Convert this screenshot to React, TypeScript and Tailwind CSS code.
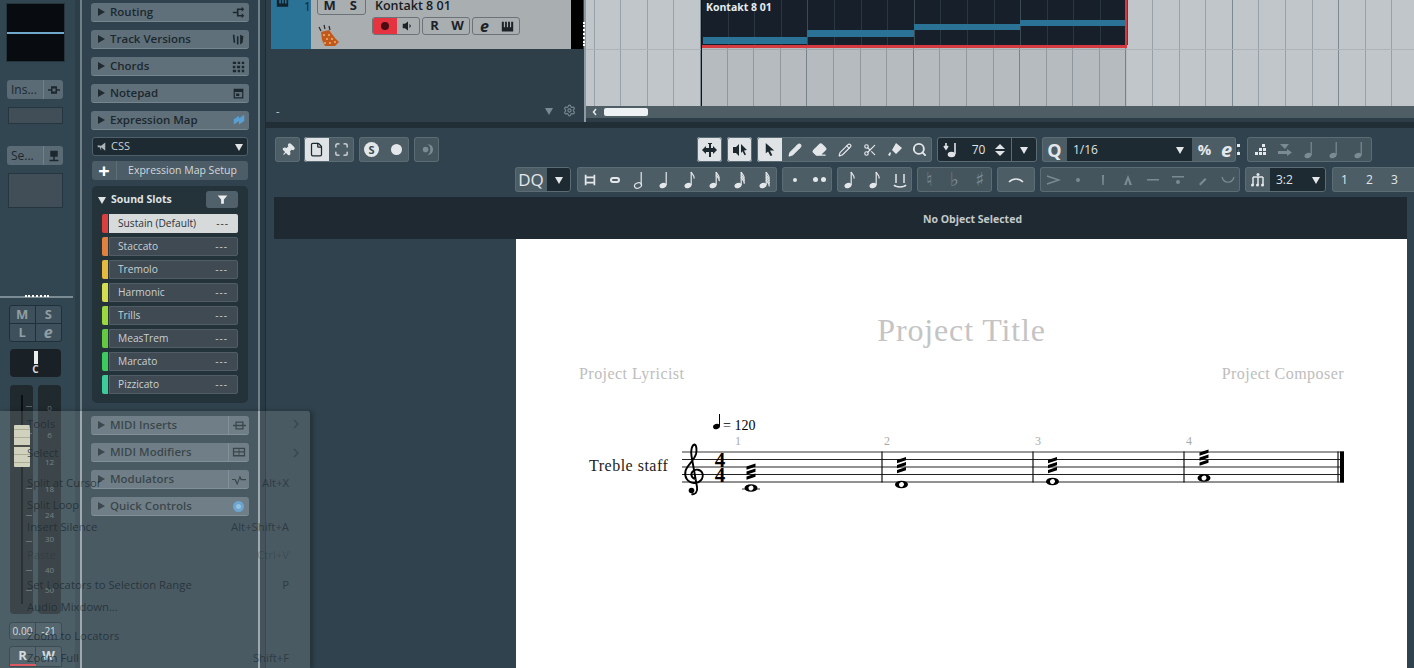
import React from 'react'
import { Pencil, Eraser, Scissors, Search, Pin, File, Maximize, Settings } from 'lucide-react'

const Tri = ({ down = false, cls = 'text-[#1f2b31]' }: { down?: boolean; cls?: string }) => (
  <svg width="8" height="8" viewBox="0 0 8 8" className={cls}>
    <path d={down ? 'M0 1h8L4 8z' : 'M1 0l7 4-7 4z'} fill="currentColor" />
  </svg>
)

const I = ({ d, cls = '', size = 16 }: { d: string; cls?: string; size?: number }) => (
  <svg width={size} height={size} viewBox="0 0 16 16" className={cls}>
    <path d={d} fill="currentColor" />
  </svg>
)

// note icon: flags = number of tails, open = half note
const Note = ({ flags = 0, open = false, cls = '' }: { flags?: number; open?: boolean; cls?: string }) => (
  <svg width="16" height="18" viewBox="0 0 16 18" className={cls}>
    <ellipse cx="6" cy="14.5" rx="3.6" ry="2.6" transform="rotate(-20 6 14.5)" fill={open ? 'none' : 'currentColor'} stroke="currentColor" strokeWidth={open ? 1.2 : 0} />
    <path d="M9.2 14V1" stroke="currentColor" strokeWidth="1.2" fill="none" />
    {Array.from({ length: flags }).map((_, i) => (
      <path key={i} d={`M9.2 ${1 + i * 2.6}c.5 2.5 3.5 3 3 6.5`} stroke="currentColor" strokeWidth="1.3" fill="none" />
    ))}
  </svg>
)

function Section({ title, icon, divided }: { title: string; icon: React.ReactNode; divided?: boolean }) {
  return (
    <div className="flex h-[19px] w-[158px] items-center rounded-[3px] bg-[#5f707a] pl-[6px] text-[#1c282e] border-b border-[#76868e]">
      <Tri />
      <span className="ml-[5px] text-[11.5px] font-semibold leading-none">{title}</span>
      <span className={`ml-auto flex h-full w-[21px] items-center justify-center ${divided ? 'border-l border-[#76868e]' : ''}`}>{icon}</span>
    </div>
  )
}

const slots = [
  ['Sustain (Default)', 'bg-[#d8403f]'],
  ['Staccato', 'bg-[#e0813f]'],
  ['Tremolo', 'bg-[#e6b93f]'],
  ['Harmonic', 'bg-[#d4dc50]'],
  ['Trills', 'bg-[#9ad83f]'],
  ['MeasTrem', 'bg-[#63c940]'],
  ['Marcato', 'bg-[#3ecb5d]'],
  ['Pizzicato', 'bg-[#3ecb9a]'],
]

function ChannelStrip() {
  return (
    <div className="flex h-full w-[75px] shrink-0 flex-col bg-[#324651] text-[#d5dadc]">
      <div className="ml-[6px] mt-[3px] h-[59px] w-[59px] border border-[#26343c] bg-[#080b10] relative">
        <div className="absolute left-0 right-0 top-[28px] h-[2px] bg-[#6fa8c9]" />
      </div>
      <div className="ml-[7px] mt-[18px] flex h-[19px] w-[56px] items-center rounded-[3px] bg-[#5a6b75] text-[12px] text-[#1c282e]">
        <span className="w-[37px] border-r border-[#728189] pl-[4px] leading-[19px] font-medium">Ins...</span>
        <span className="flex flex-1 justify-center"><I size={12} d="M4 3h8v10H4zM6 6v4h4V6zM0 7h4v2H0zM12 7h4v2h-4z" /></span>
      </div>
      <div className="ml-[8px] mt-[8px] h-[17px] w-[55px] border border-[#263640] bg-[#414e57]" />
      <div className="ml-[7px] mt-[22px] flex h-[19px] w-[56px] items-center rounded-[3px] bg-[#5a6b75] text-[12px] text-[#1c282e]">
        <span className="w-[37px] border-r border-[#728189] pl-[4px] leading-[19px] font-medium">Se...</span>
        <span className="flex flex-1 justify-center"><I size={12} d="M3 1h10v8H3zM7 9h2v4H7zM2 13h12v2H2z" /></span>
      </div>
      <div className="ml-[8px] mt-[8px] h-[35px] w-[55px] border border-[#263640] bg-[#414e57]" />

      <div className="mt-[88px] flex h-[2px] w-[73px] justify-center bg-[#7b8b93]">
        <div className="h-[2px] w-[24px] -translate-y-px border-t-2 border-dotted border-white" />
      </div>

      <div className="ml-[9px] mt-[7px] grid h-[37px] w-[53px] grid-cols-2 grid-rows-2 overflow-hidden rounded-[3px] border border-[#20303a] bg-[#3e505b] text-[13px] font-bold leading-none text-[#8f9da4]">
        <span className="flex items-center justify-center border-b border-r border-[#20303a]">M</span>
        <span className="flex items-center justify-center border-b border-[#20303a]">S</span>
        <span className="flex items-center justify-center border-r border-[#20303a]">L</span>
        <span className="flex items-center justify-center text-[16px] italic">e</span>
      </div>
      <div className="ml-[10px] mt-[7px] flex h-[28px] w-[51px] flex-col items-center rounded-[4px] bg-[#1a2126]">
        <div className="mt-[2px] h-[13px] w-[4px] bg-[#eceeee]" />
        <span className="text-[10px] font-bold leading-[10px] text-[#d5dadc]">C</span>
      </div>

      <div className="ml-[10px] mt-[8px] flex h-[229px] gap-[5px]">
        <div className="relative w-[23px] rounded-[4px] bg-[#1f292e]">
          <div className="absolute bottom-[10px] left-[11px] top-[10px] w-[2px] bg-[#0b0f12]" />
          <div className="absolute left-[16px] top-[21px] h-px w-[6px] bg-[#56636a]" />
          <div className="absolute left-[16px] top-[48px] h-px w-[6px] bg-[#56636a]" />
          <div className="absolute left-[16px] top-[103px] h-px w-[6px] bg-[#56636a]" />
          <div className="absolute left-[16px] top-[130px] h-px w-[6px] bg-[#56636a]" />
          <div className="absolute left-[16px] top-[156px] h-px w-[6px] bg-[#56636a]" />
          <div className="absolute left-[16px] top-[185px] h-px w-[6px] bg-[#56636a]" />
          <div className="absolute left-[16px] top-[205px] h-px w-[6px] bg-[#56636a]" />
          <div className="absolute left-[4px] top-[40px] flex h-[42px] w-[16px] flex-col justify-between rounded-[1px] bg-[#d9d8bd] py-[4px]">
            <div className="h-px bg-[#aaa98e]" />
            <div className="h-px bg-[#aaa98e]" />
            <div className="h-[2px] bg-[#33332c]" />
            <div className="h-px bg-[#aaa98e]" />
            <div className="h-px bg-[#aaa98e]" />
          </div>
        </div>
        <div className="relative w-[23px] rounded-[4px] bg-[#1f292e] text-center text-[8px] leading-none text-[#66747b]">
          <span className="absolute inset-x-0 top-[19px]">0</span>
          <span className="absolute inset-x-0 top-[46px]">6</span>
          <span className="absolute inset-x-0 top-[73px]">12</span>
          <span className="absolute inset-x-0 top-[100px]">18</span>
          <span className="absolute inset-x-0 top-[126px]">24</span>
          <span className="absolute inset-x-0 top-[150px]">30</span>
          <span className="absolute inset-x-0 top-[181px]">40</span>
          <span className="absolute inset-x-0 top-[201px]">50</span>
        </div>
      </div>

      <div className="ml-[9px] mt-[8px] flex h-[18px] w-[53px] rounded-[3px] border border-[#20303a] bg-[#3e505b] text-[10px] leading-[16px] text-[#dfe3e5]">
        <span className="w-[26px] border-r border-[#20303a] text-center">0.00</span>
        <span className="flex-1 text-center">-21</span>
      </div>
      <div className="relative ml-[9px] mt-[6px] flex h-[21px] w-[53px] overflow-hidden rounded-t-[3px] border border-[#20303a] bg-[#3e505b] text-[13px] font-bold leading-[16px] text-[#dfe3e5]">
        <span className="w-[26px] border-r border-[#20303a] text-center">R</span>
        <span className="flex-1 text-center">W</span>
        <div className="absolute bottom-0 left-0 h-[2px] w-[26px] bg-[#e5404a]" />
      </div>
    </div>
  )
}

function Inspector() {
  return (
    <div className="flex h-full w-[180px] shrink-0 flex-col gap-[8px] border-x-2 border-[#6f8089] bg-[#2f424d] pl-[9px] pt-[3px]" >
      <Section title="Routing" icon={<I size={13} cls="text-[#1c282e]" d="M1 7h5V3h6V1l3 3-3 3V5H8v6h4V9l3 3-3 3v-2H6V9H1z" />} />
      <Section title="Track Versions" icon={<I size={13} cls="text-[#1c282e]" d="M1 2h2l1 10H2zM6 4h2v10H6zM10 2l4 2-1 8-3 2z" />} />
      <Section title="Chords" icon={<I size={13} cls="text-[#1c282e]" d="M1 2h4v3H1zM7 2h3v3H7zM12 2h3v3h-3zM1 7h3v3H1zM6 7h4v3H6zM12 7h3v3h-3zM1 12h4v3H1zM7 12h3v3H7zM12 12h3v3h-3z" />} />
      <Section title="Notepad" icon={<I size={13} cls="text-[#1c282e]" d="M2 2h12v12H2zM3.5 6v6.5h9V6zM5 8h4v3H5z" />} />
      <Section title="Expression Map" icon={<I size={14} cls="text-[#5a9fd4]" d="M2 7l6-4v6l-6 4zM8 6l6-4v7l-6 4z" />} />
      <div className="-ml-px -mt-[1px] flex h-[19px] w-[156px] translate-x-[2px] items-center rounded-[3px] border border-[#50606a] bg-[#1e2a32] pl-[4px] pr-[4px] text-[11px] text-[#c9d0d4]">
        <I size={11} cls="text-[#aab4b9]" d="M1 6l5 1 6-5v12L6 9v5L4 9H1z" />
        <span className="ml-[3px]">CSS</span>
        <span className="ml-auto"><Tri down cls="text-[#dfe3e5]" /></span>
      </div>
      <div className="-mt-[3px] ml-px flex h-[19px] w-[156px] items-center rounded-[3px] bg-[#4d5d67] text-[10.5px] text-[#d2d8db]">
        <span className="flex h-full w-[25px] items-center justify-center border-r border-[#5f6f78] text-[20px] font-bold leading-none text-white">+</span>
        <span className="flex-1 text-center">Expression Map Setup</span>
      </div>
      <div className="-mt-[2px] ml-px flex h-[217px] w-[156px] flex-col rounded-[5px] bg-[#24323a] pl-[10px] pr-[10px]">
        <div className="flex h-[28px] items-center pb-[1px]">
          <Tri down cls="-ml-[4px] text-[#dfe3e5]" />
          <span className="ml-[5px] text-[10.5px] font-bold text-[#dfe3e5]">Sound Slots</span>
          <span className="ml-auto flex h-[17px] w-[32px] items-center justify-center rounded-[3px] bg-[#51616b]">
            <I size={11} cls="text-[#eceeee]" d="M1 2h14l-5 6v6H6V8z" />
          </span>
        </div>
        <div className="flex flex-col gap-[4px]">
          {slots.map(([name, col], i) => (
            <div key={name} className="flex h-[19px]">
              <div className={`w-[6px] rounded-l-[2px] ${col}`} />
              <div className={`ml-px flex flex-1 items-center justify-between rounded-r-[2px] pr-[9px] text-[10.2px] ${i === 0 ? 'bg-[#d7dadb] pl-[9px] text-[#2a3339]' : 'border border-[#515d66] bg-[#3f4a53] pl-[8px] text-[#c9d0d4]'}`}>
                <span>{name}</span>
                <span className="tracking-[1px]">---</span>
              </div>
            </div>
          ))}
        </div>
      </div>
      <div className="mt-[5px] flex flex-col gap-[8px]">
        <Section divided title="MIDI Inserts" icon={<I size={13} cls="text-[#1c282e]" d="M3 3h10v10H3zM4.5 4.5v2.5h7V4.5zM4.5 9v2.5h7V9zM0 7h3v2H0zM13 7h3v2h-3z" />} />
        <Section divided title="MIDI Modifiers" icon={<I size={14} cls="text-[#1c282e]" d="M1 3h14v10H1zM2.5 4.5V7h5V4.5zM8.5 4.5V7h5V4.5zM2.5 8.5v3h5v-3zM8.5 8.5v3h5v-3z" />} />
        <Section divided title="Modulators" icon={<I size={14} cls="text-[#1c282e]" d="M0 8h4l2 4 3-8 2 4h5v1.3h-6L9 7l-3 8-3-6H0z" />} />
        <Section title="Quick Controls" icon={<span className="block h-[11px] w-[11px] rounded-full border-[3px] border-[#5a9fd4] bg-[#8dc3ea]" />} />
      </div>
    </div>
  )
}

function TrackHeader() {
  const box = 'flex items-center rounded-[3px] border border-[#6c7378] text-[#1c2227] font-bold text-[13px] h-[18px]'
  return (
    <div className="flex h-full w-[318px] shrink-0 flex-col bg-[#2f3f49] pl-[5px]">
      <div className="flex h-[49px]">
        <div className="relative w-[40px] bg-[#2a7396] text-[#11222c]">
          <I size={13} cls="ml-[5px] -mt-[3px]" d="M1 0h14v12H1zM4 0v8h2V0zM7.500 0v8h2V0zM11 0v8h2V0z" />
          <span className="absolute left-[33px] top-0 text-[12px] leading-[13px] text-[#11222c]">1</span>
        </div>
        <div className="relative w-[260px] bg-[#a9aeb1]">
          <div className={`${box} absolute left-[6px] top-[-3px] w-[49px]`}>
            <span className="flex-1 text-center">M</span>
            <span className="flex-1 text-center">S</span>
          </div>
          <span className="absolute left-[64px] top-[-3px] text-[12.5px] font-semibold leading-[18px] text-[#151b1f]">Kontakt 8 01</span>
          <div className={`${box} absolute left-[61px] top-[17px] w-[48px] overflow-hidden`}>
            <span className="flex h-full w-[24px] items-center justify-center bg-[#e5333f]"><span className="h-[8px] w-[8px] rounded-full bg-[#4a0c10]" /></span>
            <span className="flex flex-1 justify-center"><I size={12} d="M1 5h3l4-3v12l-4-3H1zM10 5l2 3-2 3z" /></span>
          </div>
          <div className={`${box} absolute left-[111px] top-[17px] w-[48px]`}>
            <span className="flex-1 text-center">R</span>
            <span className="flex-1 text-center">W</span>
          </div>
          <div className={`${box} absolute left-[161px] top-[17px] w-[48px]`}>
            <span className="flex-1 text-center text-[16px] leading-none italic">e</span>
            <span className="flex flex-1 justify-center"><I size={13} d="M1 2h14v12H1zM3.500 2v7h1.500V2zM7.200 2v7h1.500V2zM11 2v7h1.500V2z" /></span>
          </div>
          <svg width="24" height="24" viewBox="0 0 24 24" className="absolute left-[6px] top-[24px]">
            <path d="M4 8l8-2 6 8 4 4-4 4-10 0-3-6z" fill="#c2591c" />
            <path d="M6 11h2M11 11h2M9 15h2M14 15h2M12 19h2M7 19h2M17 18h2" stroke="#f2b36a" strokeWidth="1.500" />
            <path d="M2 3l2 4M7 1l1 4M12 2l1 4" stroke="#2a2a2a" strokeWidth="1.200" />
          </svg>
        </div>
        <div className="w-[12px] bg-black" />
      </div>
      <div className="flex h-[73px] items-end pb-[4px] pl-[4px] pr-[8px] text-[#cfd5d8]">
        <span className="mb-[2px] ml-[1px] text-[11px] leading-none">-</span>
        <span className="ml-auto mb-[3px]"><Tri down cls="text-[#7b8a92]" /></span>
        <Settings size={13} className="ml-[10px] mb-[1px] text-[#7b8a92]" />
      </div>
    </div>
  )
}

function Lanes() {
  const cols = Array.from({ length: 31 })
  return (
    <div className="relative flex min-w-0 flex-1 flex-col border-l-2 border-[#8d9aa1]">
      <div className="absolute -left-[3px] top-[22px] h-[24px] border-l-2 border-dotted border-white" />
      <div className="relative h-[106px] overflow-hidden bg-[#c0c6ca]">
        <div className="flex h-full">
          <div className="w-[8.6px] shrink-0 border-r border-[#98a1a7]" />
          {cols.map((_, i) => (
            <div key={i} className={`w-[26.6px] shrink-0 border-r ${i % 4 === 3 ? 'border-[#7e8a91]' : 'border-[#98a1a7]'}`} />
          ))}
        </div>
        <div className="absolute inset-x-0 top-[49px] h-px bg-[#adb3b9]" />
        <div className="absolute bottom-0 left-[116px] top-[48px] w-[425px] bg-black/5" />
        <div className="absolute left-[116px] top-0 flex h-[48px] w-[425px] border-r-2 border-b-[3px] border-[#d43a40] bg-[#17202a]">
          {Array.from({ length: 16 }).map((_, i) => (
            <div key={i} className={`w-[26.6px] shrink-0 border-r ${i % 4 === 3 ? 'border-[#3c4a54]' : 'border-[#2a3742]'}`} />
          ))}
          <span className="absolute left-[4px] top-0 text-[10.5px] font-bold leading-[14px] text-[#e6ecef]">Kontakt 8 01</span>
          <div className="absolute left-[1px] top-[37px] h-[7px] w-[104px] bg-[#2a7396]" />
          <div className="absolute left-[105px] top-[30px] h-[7px] w-[107px] bg-[#2a7396]" />
          <div className="absolute left-[212px] top-[24px] h-[6px] w-[106px] bg-[#2a7396]" />
          <div className="absolute left-[318px] top-[20px] h-[6px] w-[105px] bg-[#2a7396]" />
        </div>
        <div className="absolute bottom-0 left-[115px] top-0 w-[1px] bg-[#10151a]" />
      </div>
      <div className="flex h-[12px] items-center bg-[#4f5e65]">
        <svg width="18" height="12" viewBox="0 0 18 12" className="text-[#e6eaec]"><path d="M10 3L7.500 6 10 9" fill="none" stroke="currentColor" strokeWidth="1.500" /></svg>
        <div className="ml-[0px] h-[8px] w-[44px] rounded-[2px] bg-[#eef1f3]" />
      </div>
      <div className="h-[4px] bg-[#2c3d47]" />
    </div>
  )
}

const Btn = ({ children, active, w = 'w-[25px]' }: { children: React.ReactNode; active?: boolean; w?: string }) => (
  <span className={`flex h-full shrink-0 items-center justify-center ${w} ${active ? 'bg-[#dfe3e5] text-[#1c282e]' : ''}`}>{children}</span>
)

const Grp = ({ children, cls = '', dim }: { children: React.ReactNode; cls?: string; dim?: boolean }) => (
  <div className={`flex h-full shrink-0 overflow-hidden rounded-[3px] outline outline-[#5c6c75] -outline-offset-1 ${dim ? 'bg-[#44555e] text-[#7b8b93]' : 'bg-[#4d5d66] text-[#e3e7e9]'} ${cls}`}>{children}</div>
)

function ToolbarTop() {
  return (
    <div className="flex h-[25px] pl-[9px]">
      <Grp><Btn><Pin size={14} fill="currentColor" className="rotate-45" /></Btn></Grp>
      <Grp cls="ml-[4px]">
        <Btn active><File size={15} /></Btn>
        <Btn><Maximize size={15} /></Btn>
      </Grp>
      <Grp cls="ml-[5px]">
        <Btn><span className="flex h-[15px] w-[15px] items-center justify-center rounded-full bg-[#e3e7e9] text-[11px] font-bold leading-none text-[#3a4a53]">S</span></Btn>
        <Btn><span className="h-[11px] w-[11px] rounded-full bg-[#e3e7e9]" /></Btn>
      </Grp>
      <Grp dim cls="ml-[5px]">
        <Btn><I size={15} d="M9 2a6 6 0 110 12A6.500 6.500 0 0012 8 6.500 6.500 0 009 2zM7 5a3 3 0 110 6 3 3 0 010-6z" /></Btn>
      </Grp>
      <Grp cls="ml-[258px]"><Btn active><I d="M7 1h3v1H9v4h2V4l4 4-4 4v-2H9v5H7v-5H4v2L0 8l4-4v2h3V2H6V1z" /></Btn></Grp>
      <Grp cls="ml-[5px]"><Btn active><I d="M1 5h3l3-3v12l-3-3H1zM9 2l6 6-3 .5 2 4-1.500.8-2-4L9 11z" /></Btn></Grp>
      <Grp cls="ml-[5px]">
        <Btn active><I size={15} d="M4 1l9 8H8.500l2.500 5-2 1-2.500-5L4 12z" /></Btn>
        <Btn><Pencil size={14} fill="currentColor" /></Btn>
        <Btn><Eraser size={15} fill="currentColor" /></Btn>
        <Btn><Pencil size={14} /></Btn>
        <Btn><Scissors size={14} /></Btn>
        <Btn><I d="M9 1l6 5-6 6-4-4zM3 10l1 1-1 3-2-1z" /></Btn>
        <Btn><Search size={15} strokeWidth={3} /></Btn>
      </Grp>
      <div className="ml-[5px] flex h-full w-[100px] shrink-0 overflow-hidden rounded-[3px] border border-[#5c6c75] bg-[#1e2a32] text-[#dfe3e5]">
        <span className="flex w-[25px] items-center justify-center">
          <svg width="16" height="18" viewBox="0 0 16 18"><path d="M3 2v5M1 5l2 3 2-3M12 2v11" stroke="currentColor" strokeWidth="1.600" fill="none" /><ellipse cx="8.500" cy="13.500" rx="3.800" ry="2.800" fill="currentColor" /></svg>
        </span>
        <span className="flex w-[31px] items-center justify-center text-[12px]">70</span>
        <span className="flex w-[12px] flex-col items-center justify-center gap-[2px]">
          <svg width="10" height="5" viewBox="0 0 10 5"><path d="M0 5l5-5 5 5z" fill="currentColor" /></svg>
          <svg width="10" height="5" viewBox="0 0 10 5"><path d="M0 0l5 5 5-5z" fill="currentColor" /></svg>
        </span>
        <span className="ml-auto flex w-[25px] items-center justify-center border-l border-[#5c6c75]"><Tri down cls="text-[#e3e7e9]" /></span>
      </div>
      <Grp cls="ml-[5px] w-[194px]">
        <Btn><span className="text-[18px] font-bold leading-none">Q</span></Btn>
        <span className="flex w-[125px] shrink-0 items-center justify-between bg-[#1e2a32] pl-[6px] pr-[8px] text-[12px] text-[#dfe3e5]">1/16<Tri down cls="text-[#e3e7e9]" /></span>
        <Btn><span className="text-[15px] font-bold leading-none">%</span></Btn>
        <Btn w="w-[19px]"><span className="text-[20px] font-bold italic leading-none">e</span></Btn>
      </Grp>
      <span className="ml-[1px] mt-[7px] h-[11px] w-[3px] border-l-[3px] border-dotted border-[#e3e7e9]" />
      <Grp dim cls="ml-[7px]">
        <Btn><I cls="text-[#e3e7e9]" d="M10 2h3v3h-3zM7 6h3v3H7zM11 6h3v3h-3zM3 10h3v3H3zM7 10h3v3H7zM11 10h3v3h-3z" /></Btn>
        <Btn><I d="M3 2h9L8 7zM1 9h9V7l5 3.500L10 14v-2H1z" /></Btn>
        <Btn><Note /></Btn>
        <Btn><Note /></Btn>
        <Btn><Note /></Btn>
      </Grp>
    </div>
  )
}

const arts = [
  <svg width="16" height="16" viewBox="0 0 16 16"><path d="M2 4l12 4-12 4" fill="none" stroke="currentColor" strokeWidth="1.500" /></svg>,
  <I size={16} d="M6 8a2 2 0 104 0 2 2 0 00-4 0z" />,
  <I size={16} d="M7 3h2l-.3 10H7.300z" />,
  <I size={16} d="M8 3l4 10H9.500L8 8l-1.500 5H4z" />,
  <I size={16} d="M2 7h12v1.500H2z" />,
  <I size={16} d="M2 4h12v1.500H2zM6 10a2 2 0 104 0 2 2 0 00-4 0z" />,
  <I size={16} d="M4 12l6-6 1.500 1.500-6 6z" />,
  <svg width="16" height="16" viewBox="0 0 16 16"><path d="M2 5c2 7 10 7 12 0" fill="none" stroke="currentColor" strokeWidth="1.200" /></svg>,
]

function ToolbarBottom() {
  return (
    <div className="mt-[5px] flex h-[25px] w-[1148px] overflow-hidden pl-[249px]">
      <Grp cls="w-[56px]">
        <span className="flex w-[32px] items-center justify-center text-[17px] font-medium">DQ</span>
        <span className="flex flex-1 items-center justify-center bg-[#1e2a32]"><Tri down cls="text-[#e3e7e9]" /></span>
      </Grp>
      <Grp cls="ml-[6px]">
        <Btn><I size={14} d="M2 2h2v2h8V2h2v12h-2v-2H4v2H2zM4 6v4h8V6z" /></Btn>
        <Btn><span className="block h-[6px] w-[10px] rounded-full border-2 border-[#e3e7e9]" /></Btn>
        <Btn><Note open /></Btn>
        <Btn><Note /></Btn>
        <Btn><Note flags={1} /></Btn>
        <Btn><Note flags={2} /></Btn>
        <Btn><Note flags={3} /></Btn>
        <Btn><Note flags={4} /></Btn>
      </Grp>
      <Grp cls="ml-[5px]">
        <Btn><span className="h-[4px] w-[4px] rounded-full bg-[#e3e7e9]" /></Btn>
        <Btn><span className="flex gap-[3px]"><span className="h-[5px] w-[5px] rounded-full bg-[#e3e7e9]" /><span className="h-[5px] w-[5px] rounded-full bg-[#e3e7e9]" /></span></Btn>
      </Grp>
      <Grp cls="ml-[5px]">
        <Btn><Note flags={1} /></Btn>
        <Btn><Note flags={1} /></Btn>
        <Btn><svg width="16" height="16" viewBox="0 0 16 16"><path d="M4 2v9M12 2v9M2 13c2 2.500 10 2.500 12 0" fill="none" stroke="currentColor" strokeWidth="1.500" /></svg></Btn>
      </Grp>
      <Grp dim cls="ml-[5px]">
        <Btn><span className="font-['DejaVu_Sans',sans-serif] text-[19px] leading-none">♮</span></Btn>
        <Btn><span className="font-['DejaVu_Sans',sans-serif] text-[19px] leading-none">♭</span></Btn>
        <Btn><span className="font-['DejaVu_Sans',sans-serif] text-[19px] leading-none">♯</span></Btn>
      </Grp>
      <Grp cls="ml-[5px]">
        <Btn w="w-[38px]"><svg width="16" height="6" viewBox="0 0 16 6"><path d="M1 5c4-4 10-4 14 0" fill="none" stroke="currentColor" strokeWidth="1.500" /></svg></Btn>
      </Grp>
      <Grp dim cls="ml-[5px]">
        {arts.map((a, i) => (
          <Btn key={i}>{a}</Btn>
        ))}
      </Grp>
      <Grp cls="ml-[5px]">
        <Btn><svg width="16" height="16" viewBox="0 0 16 16"><path d="M3 5h10M3 5v8M8 5v8M13 5v8" fill="none" stroke="currentColor" strokeWidth="1.500" /><circle cx="2.500" cy="13" r="1.500" fill="currentColor" /><circle cx="7.500" cy="13" r="1.500" fill="currentColor" /><circle cx="12.500" cy="13" r="1.500" fill="currentColor" /><circle cx="8" cy="2.500" r="1.500" fill="currentColor" /></svg></Btn>
        <span className="flex w-[56px] shrink-0 items-center justify-between bg-[#1e2a32] pl-[6px] pr-[6px] text-[12px] text-[#dfe3e5]">3:2<Tri down cls="text-[#e3e7e9]" /></span>
      </Grp>
      <Grp cls="ml-[6px] w-[100px] shrink-0 text-[12px]">
        <Btn>1</Btn><Btn>2</Btn><Btn>3</Btn>
      </Grp>
    </div>
  )
}

const Whole = ({ x, y }: { x: number; y: number }) => (
  <g>
    <ellipse cx={x} cy={y} rx="6.500" ry="3.800" fill="#000" />
    <ellipse cx={x} cy={y} rx="2.600" ry="2.300" transform={`rotate(-35 ${x} ${y})`} fill="#fff" />
  </g>
)

const Trem = ({ x, y }: { x: number; y: number }) => (
  <g fill="#000">
    {[0, 5, 10].map(o => (
      <polygon key={o} points={`${x - 4.500},${y + o + 1.500} ${x + 4.500},${y + o - 1.500} ${x + 4.500},${y + o + 1.800} ${x - 4.500},${y + o + 4.800}`} />
    ))}
  </g>
)

function Staff() {
  const ys = [452, 459.5, 467, 474.5, 482]
  const serif = '"Liberation Serif", serif'
  return (
    <svg width="680" height="90" viewBox="675 410 680 90" className="shrink-0">
      {ys.map((y, i) => (
        <line key={y} x1="682" x2="1344" y1={y} y2={y} stroke={i === 0 ? '#777' : '#222'} strokeWidth={i === 0 ? 1.400 : 1} />
      ))}
      {[882, 1033, 1184, 1338].map(x => (
        <line key={x} x1={x} x2={x} y1="451.500" y2="482.500" stroke="#111" strokeWidth="1.200" />
      ))}
      <rect x="1340" y="451.500" width="4" height="31" fill="#000" />
      <path d="M696.500 479C692 479 690 475 692.500 471.500C695 468.500 701 469 702.500 473.500C704 479 699 483.500 694 483C687.500 482.500 684 477 685.500 471C687 465 694 461 696 454C697 450 696.500 445 694.500 444.500C692 445 690.500 450 691.500 456L697 487C698 492 695 495 691.500 494" fill="none" stroke="#000" strokeWidth="1.900" />
      <circle cx="691.500" cy="490.500" r="2.800" fill="#000" />
      <text x="720" y="467" fontFamily={serif} fontWeight="700" fontSize="21" textAnchor="middle">4</text>
      <text x="720" y="482" fontFamily={serif} fontWeight="700" fontSize="21" textAnchor="middle">4</text>
      <ellipse cx="716.500" cy="426.500" rx="3.500" ry="2.600" transform="rotate(-20 716.500 426.500)" fill="#000" />
      <line x1="719.500" x2="719.500" y1="414" y2="426" stroke="#000" strokeWidth="1" />
      <text x="723" y="429.500" fontFamily={serif} fontSize="14">= 120</text>
      {[[738, '1'], [887, '2'], [1038, '3'], [1189, '4']].map(([x, t]) => (
        <text key={t} x={x} y="445" fontFamily={serif} fontSize="12" fill="#aaa" textAnchor="middle">{t}</text>
      ))}
      <line x1="742" x2="760" y1="489" y2="489" stroke="#333" />
      <Whole x={751} y={488} />
      <Trem x={751} y={465} />
      <Whole x={901.500} y={484.500} />
      <Trem x={901.500} y={458.500} />
      <Whole x={1052.500} y={481.500} />
      <Trem x={1052.500} y={458.500} />
      <Whole x={1204} y={478} />
      <Trem x={1204} y={451} />
    </svg>
  )
}

function ScorePage() {
  return (
    <div className="flex flex-1 bg-[#2f424d] pl-[250px]">
      <div className="flex w-[891px] flex-col bg-white font-['Liberation_Serif',serif]">
        <div className="mt-[71px] text-center text-[32px] leading-[40px] tracking-[0.85px] text-[#c4c4c4]">Project Title</div>
        <div className="mt-[14px] flex justify-between px-[63px] text-[16px] leading-[20px] tracking-[0.45px] text-[#bdbdbd]">
          <span>Project Lyricist</span>
          <span>Project Composer</span>
        </div>
        <div className="mt-[26px] flex pl-[73px]">
          <span className="mt-[46px] w-[86px] text-[16px] leading-[20px] tracking-[0.5px] text-[#222]">Treble staff</span>
          <Staff />
        </div>
      </div>
    </div>
  )
}

const menu: { t: string; k?: string; arrow?: boolean; gap?: string; faded?: boolean }[] = [
  { t: 'Tools', arrow: true },
  { t: 'Select', arrow: true, gap: 'mt-[7px]' },
  { t: 'Split at Cursor', k: 'Alt+X', gap: 'mt-[8px]' },
  { t: 'Split Loop' },
  { t: 'Insert Silence', k: 'Alt+Shift+A' },
  { t: 'Paste', k: 'Ctrl+V', gap: 'mt-[6px]', faded: true },
  { t: 'Set Locators to Selection Range', k: 'P', gap: 'mt-[8px]' },
  { t: 'Audio Mixdown...' },
  { t: 'Zoom to Locators', gap: 'mt-[7px]' },
  { t: 'Zoom Full', k: 'Shift+F' },
]

function ContextMenu() {
  return (
    <div className="absolute left-0 top-[411px] h-[257px] w-[310px] rounded-tr-[3px] bg-[#b4bcc0]/20 pt-[2px] shadow-[3px_0_4px_rgba(0,0,0,0.25)] font-['Open_Sans',sans-serif]">
      <div className="absolute bottom-0 left-[80px] top-0 w-[2px] bg-white/25" />
      <div className="absolute bottom-0 left-[258px] top-0 w-[2px] bg-white/25" />
      {menu.map(m => (
        <div key={m.t} className={`flex h-[22px] items-center justify-between pl-[27px] text-[11.3px] leading-none ${m.gap ?? ''} ${m.arrow ? 'pr-[10px]' : 'pr-[21px]'} ${m.faded ? 'text-[#1c282e]/35' : 'text-[#1c282e]/75'}`}>
          <span>{m.t}</span>
          {m.k && <span className="opacity-80">{m.k}</span>}
          {m.arrow && (
            <svg width="8" height="10" viewBox="0 0 8 10" className="opacity-50"><path d="M2 1l4 4-4 4" fill="none" stroke="currentColor" strokeWidth="1.200" /></svg>
          )}
        </div>
      ))}
    </div>
  )
}

export default function App() {
  return (
    <div className="relative flex h-[668px] w-[1414px] overflow-hidden bg-[#2c3e48] font-['Open_Sans',sans-serif]">
      <ChannelStrip />
      <div className="w-[5px] shrink-0 bg-[#2c3e48]" />
      <Inspector />
      <div className="w-[5px] shrink-0 bg-[#2a3a44]" />
      <div className="flex min-w-0 flex-1 flex-col border-l border-[#1f2b33]">
        <div className="flex h-[122px] shrink-0">
          <TrackHeader />
          <Lanes />
        </div>
        <div className="h-[6px] shrink-0 bg-[#222e36]" />
        <div className="flex min-h-0 flex-1 flex-col bg-[#2f424d] pt-[9px]">
          <ToolbarTop />
          <ToolbarBottom />
          <div className="ml-[8px] mr-[7px] mt-[5px] flex h-[42px] shrink-0 items-center justify-center bg-[#1f2931] pl-[264px] pt-[4px] text-[10.5px] font-bold text-[#c3c9cc]">
            <span>No Object Selected</span>
          </div>
          <ScorePage />
        </div>
      </div>
      <ContextMenu />
    </div>
  )
}
